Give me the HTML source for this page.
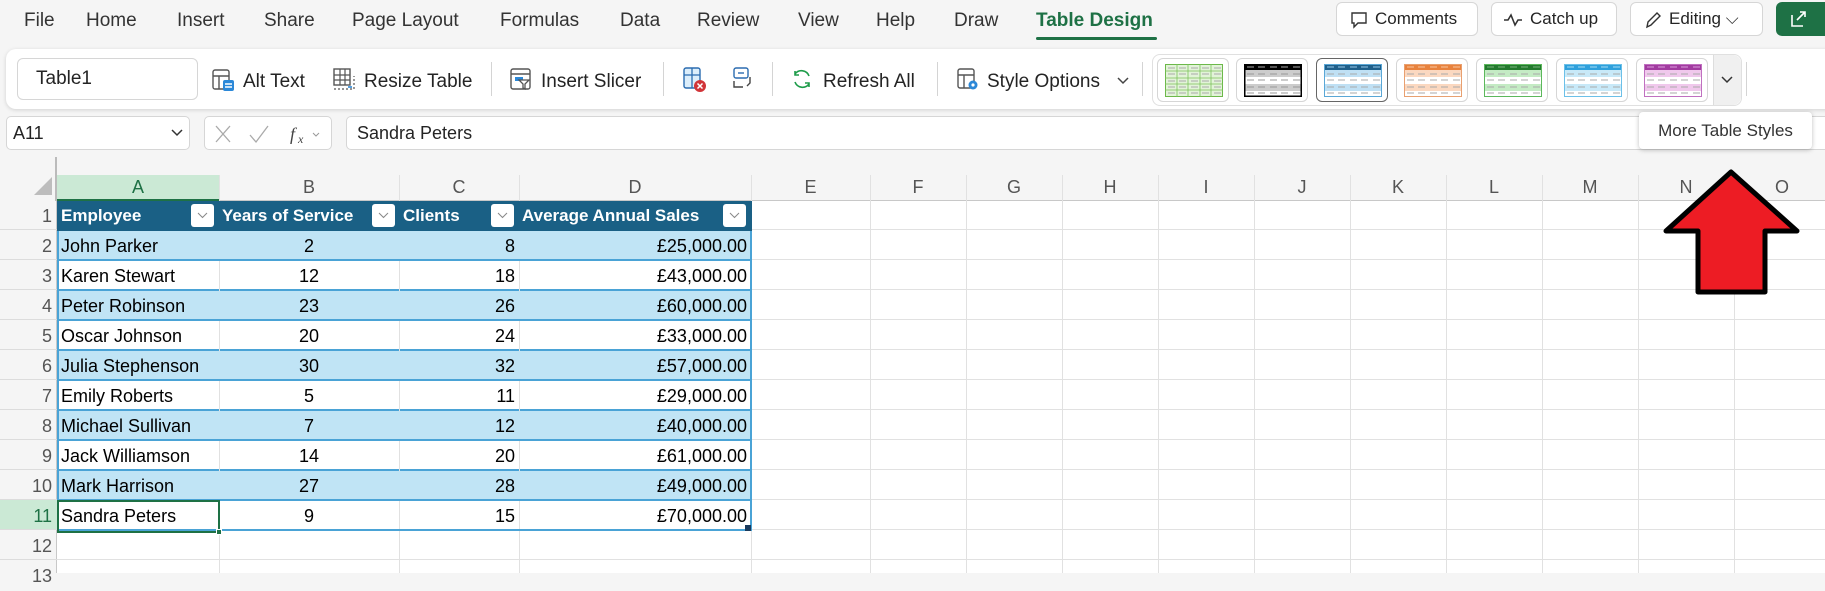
<!DOCTYPE html>
<html><head><meta charset="utf-8"><style>
*{box-sizing:border-box;margin:0;padding:0}
body{width:1825px;height:573px;overflow:hidden;background:#f5f5f5;font-family:"Liberation Sans",sans-serif;position:relative;color:#242424}
.a{position:absolute}
.tab{position:absolute;top:10px;font-size:19px;color:#333}
.btn{position:absolute;top:2px;height:34px;background:#fff;border:1px solid #d6d6d6;border-radius:6px;font-size:17px;line-height:32px;padding-left:38px}
.rb{position:absolute;top:71px;font-size:19px;color:#242424}
.sep{position:absolute;top:62px;width:1px;height:34px;background:#d4d4d4}
.sw{position:absolute;top:58px;width:72px;height:44px;border:1px solid #d6d6d6;border-radius:6px;background:#fff}
.sw svg{position:absolute;left:7px;top:5px}
.ch{position:absolute;top:175px;height:25px;font-size:18px;color:#555;text-align:center;line-height:25px}
.rh{position:absolute;left:0;width:52px;text-align:right;font-size:18px;color:#555;line-height:30px}
.c{position:absolute;height:30px;line-height:30px;font-size:18px;color:#000;white-space:nowrap}
</style></head><body>
<div class="tab" style="left:24px">File</div>
<div class="tab" style="left:86px">Home</div>
<div class="tab" style="left:177px">Insert</div>
<div class="tab" style="left:264px">Share</div>
<div class="tab" style="left:352px">Page Layout</div>
<div class="tab" style="left:500px">Formulas</div>
<div class="tab" style="left:620px">Data</div>
<div class="tab" style="left:697px">Review</div>
<div class="tab" style="left:798px">View</div>
<div class="tab" style="left:876px">Help</div>
<div class="tab" style="left:954px">Draw</div>
<div class="tab" style="left:1036px;color:#1e7145;font-weight:bold">Table Design</div>
<div class="a" style="left:1036px;top:37px;width:121px;height:3px;background:#1e7145;border-radius:2px"></div>
<div class="btn" style="left:1336px;width:142px"><svg class="a" style="left:12px;top:7px" width="20" height="20" viewBox="0 0 20 20"><path d="M3 3h14v10H9l-4 4v-4H3z" fill="none" stroke="#333" stroke-width="1.4"/></svg>Comments</div>
<div class="btn" style="left:1491px;width:126px"><svg class="a" style="left:10px;top:8px" width="22" height="18" viewBox="0 0 22 18"><path d="M2 9h4l3-5 4 10 3-5h4" fill="none" stroke="#333" stroke-width="1.6"/></svg>Catch up</div>
<div class="btn" style="left:1630px;width:133px"><svg class="a" style="left:12px;top:6px" width="20" height="22" viewBox="0 0 20 22"><path d="M4 18l1-5 9-9 3 3-9 9z" fill="none" stroke="#333" stroke-width="1.4"/></svg>Editing ⌵</div>
<div class="a" style="left:1776px;top:2px;width:60px;height:34px;background:#1e7145;border-radius:6px"><svg class="a" style="left:12px;top:7px" width="20" height="20" viewBox="0 0 20 20"><path d="M4 6v11h11M9 11l8-8M12 3h5v5" fill="none" stroke="#fff" stroke-width="1.6"/></svg></div>
<div class="a" style="left:6px;top:49px;width:1830px;height:60px;background:#fff;border-radius:10px;box-shadow:0 1px 4px rgba(0,0,0,.15)"></div>
<div class="a" style="left:17px;top:58px;width:181px;height:42px;border:1px solid #d6d6d6;border-radius:6px;font-size:19px;line-height:40px;padding-left:18px">Table1</div>
<svg class="a" style="left:211px;top:67px" width="26" height="26" viewBox="0 0 26 26"><rect x="2" y="3" width="16" height="19" rx="2" fill="none" stroke="#555" stroke-width="1.4"/><path d="M2 9h16M8 9v13" stroke="#555" stroke-width="1.4"/><rect x="12" y="13" width="11" height="11" rx="2" fill="#2b88d8"/><path d="M14 17h7M14 20h7" stroke="#fff" stroke-width="1.4"/></svg>
<div class="rb" style="left:243px">Alt Text</div>
<svg class="a" style="left:331px;top:66px" width="26" height="26" viewBox="0 0 26 26"><rect x="3" y="3" width="16" height="16" fill="none" stroke="#555" stroke-width="1.4"/><path d="M3 9h16M3 14h16M9 3v16M14 3v16" stroke="#555" stroke-width="1.2"/><path d="M3 23h20V10" fill="none" stroke="#555" stroke-width="1.2" stroke-dasharray="2 2"/><path d="M17 21l4 0" stroke="#2b88d8" stroke-width="1.6"/></svg>
<div class="rb" style="left:364px">Resize Table</div>
<div class="sep" style="left:491px"></div>
<svg class="a" style="left:508px;top:66px" width="26" height="26" viewBox="0 0 26 26"><rect x="3" y="3" width="19" height="20" rx="2" fill="none" stroke="#555" stroke-width="1.4"/><path d="M3 8h19" stroke="#555" stroke-width="1.4"/><rect x="7" y="11" width="8" height="4" fill="#2b88d8"/><path d="M11 14h10l-4 4v5l-2-1v-4z" fill="#fff" stroke="#555" stroke-width="1.3"/></svg>
<div class="rb" style="left:541px">Insert Slicer</div>
<div class="sep" style="left:663px"></div>
<svg class="a" style="left:681px;top:65px" width="26" height="28" viewBox="0 0 26 28"><rect x="3" y="3" width="16" height="20" rx="2" fill="#dceefb" stroke="#2b6cb0" stroke-width="1.4"/><path d="M3 10h16M11 3v20" stroke="#2b6cb0" stroke-width="1.3"/><circle cx="19" cy="21" r="6" fill="#d13438"/><path d="M16.5 18.5l5 5M21.5 18.5l-5 5" stroke="#fff" stroke-width="1.5"/></svg>
<svg class="a" style="left:729px;top:65px" width="26" height="28" viewBox="0 0 26 28"><rect x="5" y="3" width="14" height="10" rx="2" fill="none" stroke="#2b6cb0" stroke-width="1.4"/><path d="M9 8h6" stroke="#2b6cb0" stroke-width="1.4"/><path d="M5 16v6h9M21 12v6l-3 3" fill="none" stroke="#444" stroke-width="1.4"/></svg>
<div class="sep" style="left:772px"></div>
<svg class="a" style="left:790px;top:67px" width="24" height="24" viewBox="0 0 24 24"><path d="M19 9a8 8 0 0 0-14-2M5 4v4h4M5 15a8 8 0 0 0 14 2M19 20v-4h-4" fill="none" stroke="#1e9c4a" stroke-width="1.6"/></svg>
<div class="rb" style="left:823px">Refresh All</div>
<div class="sep" style="left:937px"></div>
<svg class="a" style="left:955px;top:66px" width="26" height="26" viewBox="0 0 26 26"><rect x="3" y="3" width="16" height="19" rx="2" fill="none" stroke="#555" stroke-width="1.4"/><path d="M3 9h16M9 9v13" stroke="#555" stroke-width="1.4"/><circle cx="18" cy="19" r="4.5" fill="#2b88d8"/><circle cx="18" cy="19" r="1.6" fill="#fff"/></svg>
<div class="rb" style="left:987px">Style Options</div>
<svg class="a" style="left:1116px;top:76px" width="14" height="10" viewBox="0 0 14 10"><path d="M2 2l5 5 5-5" fill="none" stroke="#444" stroke-width="1.5"/></svg>
<div class="sep" style="left:1142px"></div>
<div class="a" style="left:1152px;top:54px;width:590px;height:52px;border:1px solid #e0e0e0;border-radius:8px"></div>
<div class="sw" style="left:1157px"><svg width="58" height="33"><rect x="0.5" y="0.5" width="57" height="32" fill="#e2f3d8" stroke="#6cb84a"/><path d="M12 0v33M23 0v33M35 0v33M46 0v33M0 7h58M0 14h58M0 20h58M0 26h58" stroke="#7cc25a" stroke-width="0.8"/><path d="M3 4h7M14 4h7M26 4h7M37 4h7M49 4h7M3 10h7M14 10h7M26 10h7M37 10h7M49 10h7M3 17h7M14 17h7M26 17h7M37 17h7M49 17h7M3 23h7M14 23h7M26 23h7M37 23h7M49 23h7M3 29h7M14 29h7M26 29h7M37 29h7M49 29h7" stroke="#aaa" stroke-width="1"/></svg></div>
<div class="sw" style="left:1236px"><svg width="58" height="33"><rect width="58" height="33" fill="#fff"/><rect width="58" height="6" fill="#000"/><rect y="6" width="58" height="7" fill="#ccc"/><rect y="20" width="58" height="7" fill="#ccc"/><rect x="0.75" y="0.75" width="56.5" height="31.5" fill="none" stroke="#000" stroke-width="1.5"/><path d="M3 3h7M14 3h7M26 3h7M37 3h7M49 3h7" stroke="#888" stroke-width="1.2"/><path d="M3 10h7M14 10h7M26 10h7M37 10h7M49 10h7M3 16h7M14 16h7M26 16h7M37 16h7M49 16h7M3 23h7M14 23h7M26 23h7M37 23h7M49 23h7M3 29h7M14 29h7M26 29h7M37 29h7M49 29h7" stroke="#999" stroke-width="1"/></svg></div>
<div class="sw" style="left:1316px;border:1.5px solid #666"><svg width="58" height="33"><rect width="58" height="33" fill="#fff"/><rect width="58" height="6" fill="#1f5f8a"/><rect y="6" width="58" height="7" fill="#bfe0f4"/><rect y="20" width="58" height="7" fill="#bfe0f4"/><rect x="0.5" y="0.5" width="57" height="32" fill="none" stroke="#5aa7d6"/><path d="M3 3h7M14 3h7M26 3h7M37 3h7M49 3h7" stroke="#7fb4d8" stroke-width="1.2"/><path d="M3 10h7M14 10h7M26 10h7M37 10h7M49 10h7M3 16h7M14 16h7M26 16h7M37 16h7M49 16h7M3 23h7M14 23h7M26 23h7M37 23h7M49 23h7M3 29h7M14 29h7M26 29h7M37 29h7M49 29h7" stroke="#aaa" stroke-width="1"/></svg></div>
<div class="sw" style="left:1396px"><svg width="58" height="33"><rect width="58" height="33" fill="#fff"/><rect width="58" height="6" fill="#e8823d"/><rect y="6" width="58" height="7" fill="#fbd8c0"/><rect y="20" width="58" height="7" fill="#fbd8c0"/><rect x="0.5" y="0.5" width="57" height="32" fill="none" stroke="#e8a070"/><path d="M3 3h7M14 3h7M26 3h7M37 3h7M49 3h7" stroke="#f4b98c" stroke-width="1.2"/><path d="M3 10h7M14 10h7M26 10h7M37 10h7M49 10h7M3 16h7M14 16h7M26 16h7M37 16h7M49 16h7M3 23h7M14 23h7M26 23h7M37 23h7M49 23h7M3 29h7M14 29h7M26 29h7M37 29h7M49 29h7" stroke="#aaa" stroke-width="1"/></svg></div>
<div class="sw" style="left:1476px"><svg width="58" height="33"><rect width="58" height="33" fill="#fff"/><rect width="58" height="6" fill="#237a2e"/><rect y="6" width="58" height="7" fill="#c4ebc4"/><rect y="20" width="58" height="7" fill="#c4ebc4"/><rect x="0.5" y="0.5" width="57" height="32" fill="none" stroke="#5cb85c"/><path d="M3 3h7M14 3h7M26 3h7M37 3h7M49 3h7" stroke="#6aa96f" stroke-width="1.2"/><path d="M3 10h7M14 10h7M26 10h7M37 10h7M49 10h7M3 16h7M14 16h7M26 16h7M37 16h7M49 16h7M3 23h7M14 23h7M26 23h7M37 23h7M49 23h7M3 29h7M14 29h7M26 29h7M37 29h7M49 29h7" stroke="#aaa" stroke-width="1"/></svg></div>
<div class="sw" style="left:1556px"><svg width="58" height="33"><rect width="58" height="33" fill="#fff"/><rect width="58" height="6" fill="#2ea0dc"/><rect y="6" width="58" height="7" fill="#c8e9f8"/><rect y="20" width="58" height="7" fill="#c8e9f8"/><rect x="0.5" y="0.5" width="57" height="32" fill="none" stroke="#6cc0e8"/><path d="M3 3h7M14 3h7M26 3h7M37 3h7M49 3h7" stroke="#8fd0f0" stroke-width="1.2"/><path d="M3 10h7M14 10h7M26 10h7M37 10h7M49 10h7M3 16h7M14 16h7M26 16h7M37 16h7M49 16h7M3 23h7M14 23h7M26 23h7M37 23h7M49 23h7M3 29h7M14 29h7M26 29h7M37 29h7M49 29h7" stroke="#aaa" stroke-width="1"/></svg></div>
<div class="sw" style="left:1636px"><svg width="58" height="33"><rect width="58" height="33" fill="#fff"/><rect width="58" height="6" fill="#a23ba0"/><rect y="6" width="58" height="7" fill="#f0c8ec"/><rect y="20" width="58" height="7" fill="#f0c8ec"/><rect x="0.5" y="0.5" width="57" height="32" fill="none" stroke="#c070c0"/><path d="M3 3h7M14 3h7M26 3h7M37 3h7M49 3h7" stroke="#d08ad0" stroke-width="1.2"/><path d="M3 10h7M14 10h7M26 10h7M37 10h7M49 10h7M3 16h7M14 16h7M26 16h7M37 16h7M49 16h7M3 23h7M14 23h7M26 23h7M37 23h7M49 23h7M3 29h7M14 29h7M26 29h7M37 29h7M49 29h7" stroke="#aaa" stroke-width="1"/></svg></div>
<div class="a" style="left:1713px;top:55px;width:28px;height:50px;background:#f0f0f0;border-left:1px solid #ddd;border-radius:0 8px 8px 0"></div>
<svg class="a" style="left:1720px;top:75px" width="14" height="10" viewBox="0 0 14 10"><path d="M2 2l5 5 5-5" fill="none" stroke="#333" stroke-width="1.5"/></svg>
<div class="sep" style="left:1746px"></div>
<div class="a" style="left:6px;top:116px;width:184px;height:34px;background:#fff;border:1px solid #d6d6d6;border-radius:5px;font-size:18px;line-height:32px;padding-left:6px">A11</div>
<svg class="a" style="left:170px;top:128px" width="14" height="10" viewBox="0 0 14 10"><path d="M2 2l5 5 5-5" fill="none" stroke="#333" stroke-width="1.5"/></svg>
<div class="a" style="left:204px;top:116px;width:128px;height:34px;background:#fff;border:1px solid #d6d6d6;border-radius:5px"></div>
<svg class="a" style="left:214px;top:123px" width="110" height="22" viewBox="0 0 110 22"><path d="M2 3l14 16M16 3L2 19" stroke="#aaa" stroke-width="1.3"/><path d="M36 12l6 7 12-16" fill="none" stroke="#aaa" stroke-width="1.3"/><text x="76" y="17" font-family="Liberation Serif" font-style="italic" font-size="18" fill="#444">f</text><text x="84" y="20" font-family="Liberation Serif" font-style="italic" font-size="12" fill="#444">x</text><path d="M99 10l3 3 3-3" fill="none" stroke="#999" stroke-width="1"/></svg>
<div class="a" style="left:346px;top:116px;width:1500px;height:34px;background:#fff;border:1px solid #d6d6d6;border-radius:5px;font-size:18px;line-height:32px;padding-left:10px">Sandra Peters</div>
<div class="a" style="left:0;top:157px;width:1825px;height:416px;background:#fff"></div>
<div class="a" style="left:0;top:157px;width:1825px;height:44px;background:#f5f5f5;border-bottom:1px solid #c8c8c8"></div>
<div class="a" style="left:0;top:157px;width:57px;height:416px;background:#f5f5f5;border-right:1px solid #c8c8c8"></div>
<div class="a" style="left:55px;top:157px;width:2px;height:44px;background:#bbb"></div>
<svg class="a" style="left:33px;top:176px" width="20" height="20"><path d="M19 1v18H1z" fill="#bdbdbd"/></svg>
<div class="a" style="left:57px;top:175px;width:162px;height:26px;background:#cbe9d5;border-bottom:2px solid #1e7145"></div>
<div class="a" style="left:0;top:500px;width:57px;height:30px;background:#cbe9d5"></div>
<div class="a" style="left:57px;top:200px;width:1770px;height:373px;background:repeating-linear-gradient(180deg,transparent 0 29px,#e1e1e1 29px 30px)"></div>
<div class="a" style="left:0;top:200px;width:57px;height:373px;background:repeating-linear-gradient(180deg,transparent 0 29px,#dcdcdc 29px 30px)"></div>
<div class="a" style="left:219px;top:175px;width:1px;height:398px;background:#e1e1e1"></div>
<div class="a" style="left:399px;top:175px;width:1px;height:398px;background:#e1e1e1"></div>
<div class="a" style="left:519px;top:175px;width:1px;height:398px;background:#e1e1e1"></div>
<div class="a" style="left:751px;top:175px;width:1px;height:398px;background:#e1e1e1"></div>
<div class="a" style="left:870px;top:175px;width:1px;height:398px;background:#e1e1e1"></div>
<div class="a" style="left:966px;top:175px;width:1px;height:398px;background:#e1e1e1"></div>
<div class="a" style="left:1062px;top:175px;width:1px;height:398px;background:#e1e1e1"></div>
<div class="a" style="left:1158px;top:175px;width:1px;height:398px;background:#e1e1e1"></div>
<div class="a" style="left:1254px;top:175px;width:1px;height:398px;background:#e1e1e1"></div>
<div class="a" style="left:1350px;top:175px;width:1px;height:398px;background:#e1e1e1"></div>
<div class="a" style="left:1446px;top:175px;width:1px;height:398px;background:#e1e1e1"></div>
<div class="a" style="left:1542px;top:175px;width:1px;height:398px;background:#e1e1e1"></div>
<div class="a" style="left:1638px;top:175px;width:1px;height:398px;background:#e1e1e1"></div>
<div class="a" style="left:1734px;top:175px;width:1px;height:398px;background:#e1e1e1"></div>
<div class="ch" style="left:57px;width:162px;color:#1e7145">A</div>
<div class="ch" style="left:219px;width:180px">B</div>
<div class="ch" style="left:399px;width:120px">C</div>
<div class="ch" style="left:519px;width:232px">D</div>
<div class="ch" style="left:751px;width:119px">E</div>
<div class="ch" style="left:870px;width:96px">F</div>
<div class="ch" style="left:966px;width:96px">G</div>
<div class="ch" style="left:1062px;width:96px">H</div>
<div class="ch" style="left:1158px;width:96px">I</div>
<div class="ch" style="left:1254px;width:96px">J</div>
<div class="ch" style="left:1350px;width:96px">K</div>
<div class="ch" style="left:1446px;width:96px">L</div>
<div class="ch" style="left:1542px;width:96px">M</div>
<div class="ch" style="left:1638px;width:96px">N</div>
<div class="ch" style="left:1734px;width:96px">O</div>
<div class="rh" style="top:201px">1</div><div class="rh" style="top:231px">2</div><div class="rh" style="top:261px">3</div><div class="rh" style="top:291px">4</div><div class="rh" style="top:321px">5</div><div class="rh" style="top:351px">6</div><div class="rh" style="top:381px">7</div><div class="rh" style="top:411px">8</div><div class="rh" style="top:441px">9</div><div class="rh" style="top:471px">10</div><div class="rh" style="top:501px;color:#1e7145">11</div><div class="rh" style="top:531px">12</div><div class="rh" style="top:561px">13</div>
<div class="a" style="left:57px;top:201px;width:695px;height:30px;background:#1a6085"></div>
<div class="a" style="left:57px;top:231px;width:695px;height:30px;background:#c0e4f5"></div>
<div class="a" style="left:57px;top:291px;width:695px;height:30px;background:#c0e4f5"></div>
<div class="a" style="left:57px;top:351px;width:695px;height:30px;background:#c0e4f5"></div>
<div class="a" style="left:57px;top:411px;width:695px;height:30px;background:#c0e4f5"></div>
<div class="a" style="left:57px;top:471px;width:695px;height:30px;background:#c0e4f5"></div>
<div class="a" style="left:57px;top:231px;width:695px;height:300px;border:2px solid #4aa3d6;border-top:none;background:repeating-linear-gradient(180deg,transparent 0 28px,#4aa3d6 28px 30px)"></div>
<div class="a" style="left:219px;top:261px;width:1px;height:240px;background:repeating-linear-gradient(180deg,#e1e1e1 0 30px,transparent 30px 60px)"></div>
<div class="a" style="left:399px;top:261px;width:1px;height:240px;background:repeating-linear-gradient(180deg,#e1e1e1 0 30px,transparent 30px 60px)"></div>
<div class="a" style="left:519px;top:261px;width:1px;height:240px;background:repeating-linear-gradient(180deg,#e1e1e1 0 30px,transparent 30px 60px)"></div>
<div class="c" style="left:61px;top:201px;color:#fff;font-weight:bold;font-size:17px">Employee</div>
<div class="c" style="left:222px;top:201px;color:#fff;font-weight:bold;font-size:17px">Years of Service</div>
<div class="c" style="left:403px;top:201px;color:#fff;font-weight:bold;font-size:17px">Clients</div>
<div class="c" style="left:522px;top:201px;color:#fff;font-weight:bold;font-size:17px">Average Annual Sales</div>
<div class="a" style="left:191px;top:204px;width:23px;height:23px;background:#fff;border-radius:3px"></div>
<div class="a" style="left:372px;top:204px;width:23px;height:23px;background:#fff;border-radius:3px"></div>
<div class="a" style="left:491px;top:204px;width:23px;height:23px;background:#fff;border-radius:3px"></div>
<div class="a" style="left:723px;top:204px;width:23px;height:23px;background:#fff;border-radius:3px"></div>
<svg class="a" style="left:0;top:0" width="760" height="240"><g fill="none" stroke="#888" stroke-width="1"><path d="M198 213l4.5 4.5 4.5-4.5M379 213l4.5 4.5 4.5-4.5M498 213l4.5 4.5 4.5-4.5M730 213l4.5 4.5 4.5-4.5"/></g></svg>
<div class="c" style="left:61px;top:231px">John Parker</div><div class="c" style="left:219px;width:180px;text-align:center;top:231px">2</div><div class="c" style="left:399px;width:116px;text-align:right;top:231px">8</div><div class="c" style="left:519px;width:228px;text-align:right;top:231px">£25,000.00</div>
<div class="c" style="left:61px;top:261px">Karen Stewart</div><div class="c" style="left:219px;width:180px;text-align:center;top:261px">12</div><div class="c" style="left:399px;width:116px;text-align:right;top:261px">18</div><div class="c" style="left:519px;width:228px;text-align:right;top:261px">£43,000.00</div>
<div class="c" style="left:61px;top:291px">Peter Robinson</div><div class="c" style="left:219px;width:180px;text-align:center;top:291px">23</div><div class="c" style="left:399px;width:116px;text-align:right;top:291px">26</div><div class="c" style="left:519px;width:228px;text-align:right;top:291px">£60,000.00</div>
<div class="c" style="left:61px;top:321px">Oscar Johnson</div><div class="c" style="left:219px;width:180px;text-align:center;top:321px">20</div><div class="c" style="left:399px;width:116px;text-align:right;top:321px">24</div><div class="c" style="left:519px;width:228px;text-align:right;top:321px">£33,000.00</div>
<div class="c" style="left:61px;top:351px">Julia Stephenson</div><div class="c" style="left:219px;width:180px;text-align:center;top:351px">30</div><div class="c" style="left:399px;width:116px;text-align:right;top:351px">32</div><div class="c" style="left:519px;width:228px;text-align:right;top:351px">£57,000.00</div>
<div class="c" style="left:61px;top:381px">Emily Roberts</div><div class="c" style="left:219px;width:180px;text-align:center;top:381px">5</div><div class="c" style="left:399px;width:116px;text-align:right;top:381px">11</div><div class="c" style="left:519px;width:228px;text-align:right;top:381px">£29,000.00</div>
<div class="c" style="left:61px;top:411px">Michael Sullivan</div><div class="c" style="left:219px;width:180px;text-align:center;top:411px">7</div><div class="c" style="left:399px;width:116px;text-align:right;top:411px">12</div><div class="c" style="left:519px;width:228px;text-align:right;top:411px">£40,000.00</div>
<div class="c" style="left:61px;top:441px">Jack Williamson</div><div class="c" style="left:219px;width:180px;text-align:center;top:441px">14</div><div class="c" style="left:399px;width:116px;text-align:right;top:441px">20</div><div class="c" style="left:519px;width:228px;text-align:right;top:441px">£61,000.00</div>
<div class="c" style="left:61px;top:471px">Mark Harrison</div><div class="c" style="left:219px;width:180px;text-align:center;top:471px">27</div><div class="c" style="left:399px;width:116px;text-align:right;top:471px">28</div><div class="c" style="left:519px;width:228px;text-align:right;top:471px">£49,000.00</div>
<div class="c" style="left:61px;top:501px">Sandra Peters</div><div class="c" style="left:219px;width:180px;text-align:center;top:501px">9</div><div class="c" style="left:399px;width:116px;text-align:right;top:501px">15</div><div class="c" style="left:519px;width:228px;text-align:right;top:501px">£70,000.00</div>
<div class="a" style="left:57px;top:500px;width:163px;height:33px;border:2px solid #1e7145"></div>
<div class="a" style="left:216px;top:529px;width:6px;height:6px;background:#1e7145;border:1px solid #fff"></div>
<div class="a" style="left:745px;top:525px;width:6px;height:6px;background:#1a3a5c"></div>
<div class="a" style="left:1639px;top:112px;width:173px;height:37px;background:#fff;border-radius:4px;box-shadow:0 1px 5px rgba(0,0,0,.25);font-size:17px;line-height:37px;text-align:center;color:#333">More Table Styles</div>
<svg class="a" style="left:1660px;top:168px" width="145" height="130" viewBox="1660 168 145 130"><path d="M1731 172L1797 231H1765V292H1698V231H1666Z" fill="#ed1c24" stroke="#000" stroke-width="5" stroke-linejoin="round"/></svg>
</body></html>
